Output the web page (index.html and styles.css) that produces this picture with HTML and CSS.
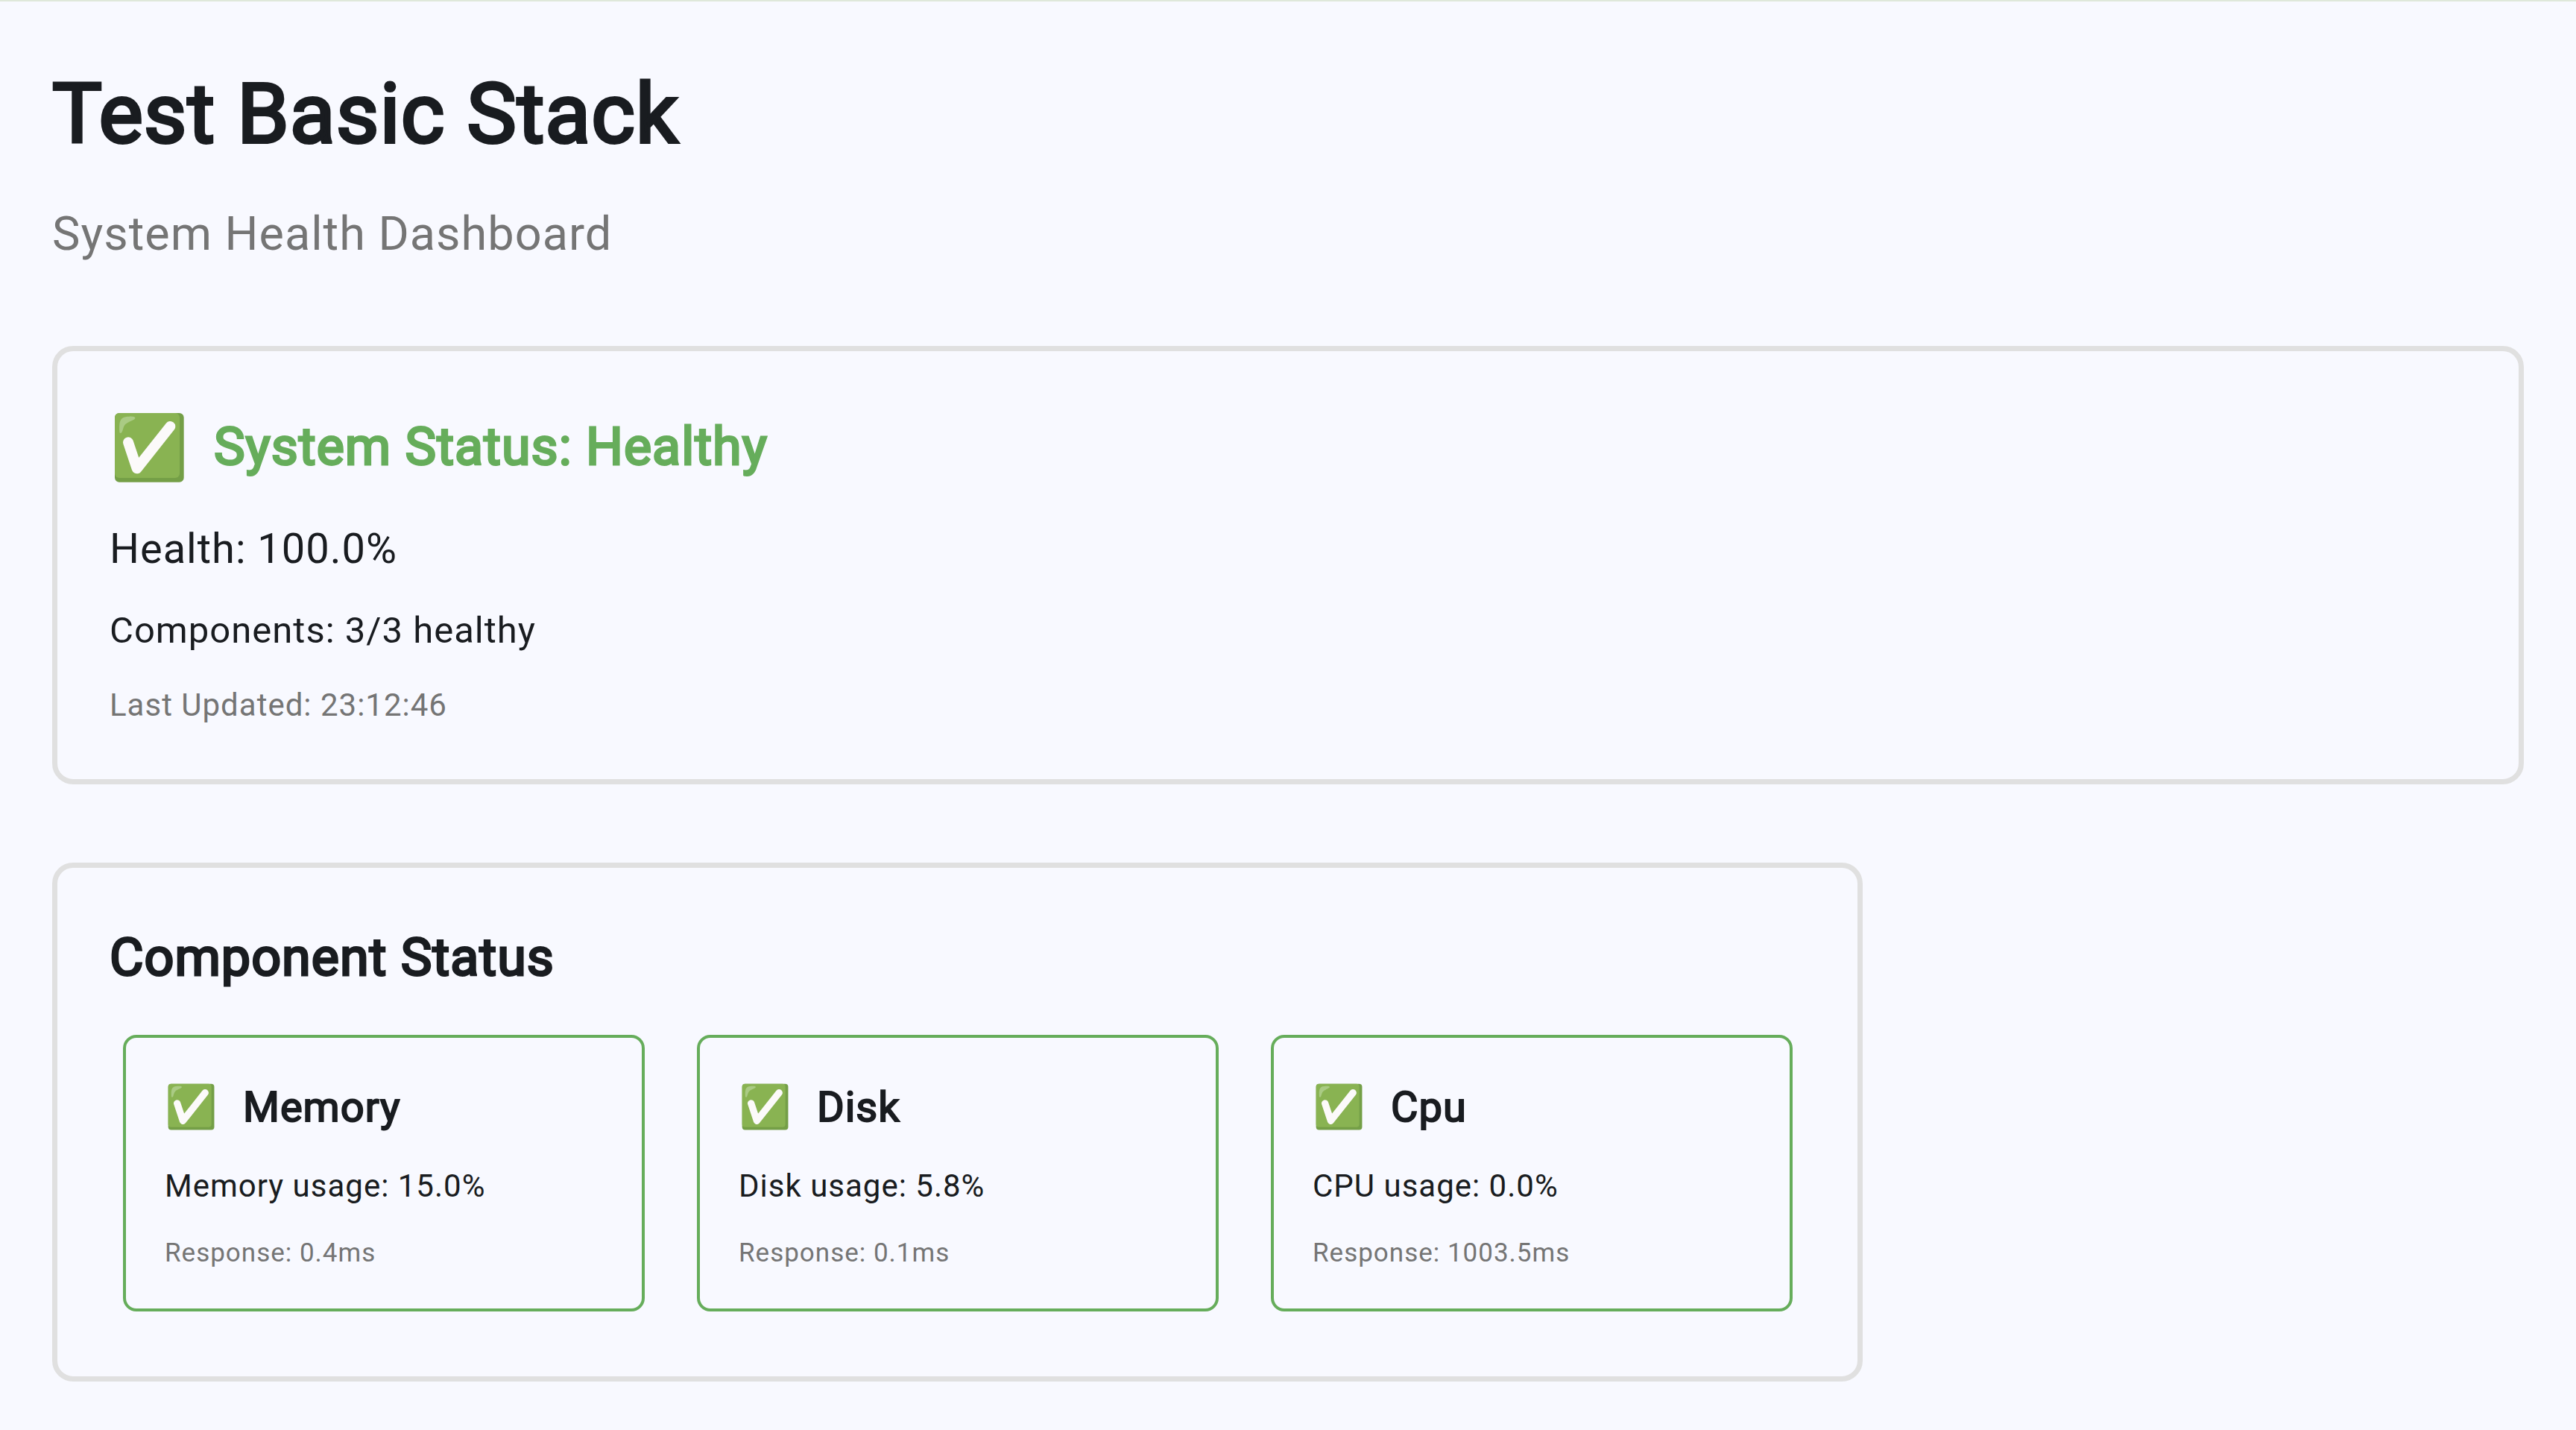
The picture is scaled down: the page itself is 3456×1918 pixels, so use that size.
FILE: index.html
```html
<!DOCTYPE html>
<html lang="en">
<head>
<meta charset="utf-8">
<title>Test Basic Stack</title>
<link rel="stylesheet" href="styles.css">
</head>
<body>
<svg class="sprite" aria-hidden="true">
  <symbol id="check" viewBox="291 273 315 360">
    <rect x="312" y="312" width="278" height="278" rx="18" fill="#749f47"/>
    <rect x="312" y="312" width="261" height="261" rx="18" fill="#89b352"/>
    <path d="M331 388C329 340 334 327 370 326C386 325 394 327 394 332C394 340 366 346 354 358C344 369 344 393 336 393C333 393 331 391 331 388Z" fill="#aacb84"/>
    <path d="M366 430L401 535L535 366" fill="none" stroke="#fcfafa" stroke-width="42" stroke-linecap="round" stroke-linejoin="round"/>
  </symbol>
</svg>
<main class="page">
  <header class="header">
    <h1 class="title">Test Basic Stack</h1>
    <p class="subtitle">System Health Dashboard</p>
  </header>

  <section class="panel summary">
    <div class="status">
      <svg class="status-icon" role="img" aria-label="Healthy"><use href="#check"/></svg>
      <h2 class="status-title">System Status: Healthy</h2>
    </div>
    <p class="text-large">Health: 100.0%</p>
    <p class="text-medium">Components: 3/3 healthy</p>
    <p class="text-small muted">Last Updated: 23:12:46</p>
  </section>

  <section class="panel components">
    <h2 class="heading">Component Status</h2>
    <div class="cards">
      <article class="card">
        <div class="card-head">
          <svg class="card-icon" role="img" aria-label="Healthy"><use href="#check"/></svg>
          <h3 class="card-title">Memory</h3>
        </div>
        <p class="text-small">Memory usage: 15.0%</p>
        <p class="text-tiny muted">Response: 0.4ms</p>
      </article>
      <article class="card">
        <div class="card-head">
          <svg class="card-icon" role="img" aria-label="Healthy"><use href="#check"/></svg>
          <h3 class="card-title">Disk</h3>
        </div>
        <p class="text-small">Disk usage: 5.8%</p>
        <p class="text-tiny muted">Response: 0.1ms</p>
      </article>
      <article class="card">
        <div class="card-head">
          <svg class="card-icon" role="img" aria-label="Healthy"><use href="#check"/></svg>
          <h3 class="card-title">Cpu</h3>
        </div>
        <p class="text-small">CPU usage: 0.0%</p>
        <p class="text-tiny muted">Response: 1003.5ms</p>
      </article>
    </div>
  </section>
</main>
</body>
</html>
```
FILE: styles.css
```css
* {
  box-sizing: border-box;
}

body {
  margin: 0;
  border-top: 2px solid #dfe8da;
  background: #f8f9ff;
  color: #191c20;
  font-family: Roboto, "Liberation Sans", sans-serif;
  letter-spacing: 1px;
}

h1, h2, h3, p {
  margin: 0;
  font-weight: 400;
}

.sprite {
  display: block;
  width: 0;
  height: 0;
}

.page {
  display: flex;
  flex-direction: column;
  gap: 105px;
  padding: 71px 70px 56px;
}

.header {
  display: flex;
  flex-direction: column;
  gap: 36px;
}

/* Headings thicken the regular cut with an outline */
.title {
  font-size: 112px;
  line-height: 160px;
  -webkit-text-stroke: 4px currentColor;
}

.subtitle {
  font-size: 63px;
  line-height: 90px;
  color: #757575;
}

.panel {
  border: 7px solid #e0e0e0;
  border-radius: 28px;
  padding: 70px;
}

.summary {
  display: flex;
  flex-direction: column;
  gap: 35px;
  padding-bottom: 69px;
}

.status {
  display: flex;
  align-items: flex-start;
  gap: 35px;
}

.status-icon {
  width: 105px;
  height: 120px;
}

.status-title {
  font-size: 70px;
  line-height: 116px;
  color: #66ad5b;
  -webkit-text-stroke: 3px currentColor;
}

.heading {
  font-size: 70px;
  line-height: 100px;
  -webkit-text-stroke: 3px currentColor;
}

.text-large {
  font-size: 56px;
  line-height: 80px;
}

.text-medium {
  font-size: 49px;
  line-height: 70px;
}

.text-small {
  font-size: 42px;
  line-height: 60px;
}

.text-tiny {
  font-size: 35px;
  line-height: 50px;
}

.muted {
  color: #757575;
}

.components {
  display: flex;
  flex-direction: column;
  gap: 54px;
  align-self: flex-start;
}

.cards {
  display: flex;
  flex-wrap: wrap;
  gap: 70px;
  padding: 0 17px 17px 18px;
}

.card {
  display: flex;
  flex-direction: column;
  gap: 35px;
  width: 700px;
  border: 4px solid #66ad5b;
  border-radius: 18px;
  padding: 52px 52px 49px;
}

.card-head {
  display: flex;
  align-items: center;
  gap: 35px;
}

.card-icon {
  width: 70px;
  height: 80px;
}

.card-title {
  font-size: 56px;
  line-height: 82px;
  -webkit-text-stroke: 2px currentColor;
}
```
